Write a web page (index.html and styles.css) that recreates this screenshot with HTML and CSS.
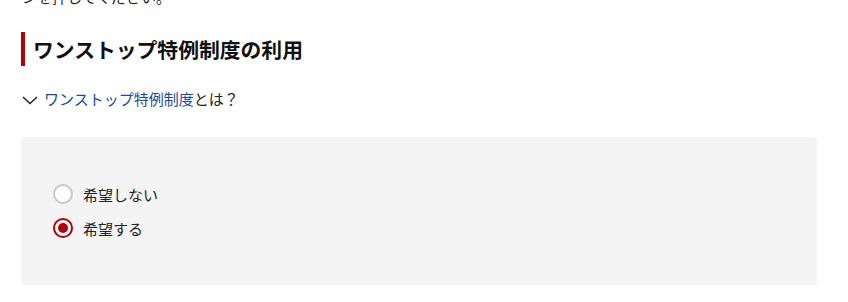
FILE: index.html
```html
<!DOCTYPE html>
<html lang="ja">
<head>
    <meta charset="UTF-8">
    <meta name="viewport" content="width=device-width, initial-scale=1.0">
    <title>ワンストップ特例制度の利用</title>
    <link rel="stylesheet" href="styles.css">
</head>
<body>
    <div class="container">
        <p class="lead">ンを押してください。</p>

        <h2 class="section-title">ワンストップ特例制度の利用</h2>

        <div class="toggle">
            <svg class="chevron" width="16" height="9" viewBox="0 0 16 9">
                <path d="M1 1 L8 7.5 L15 1" fill="none" stroke="#222" stroke-width="1.5"/>
            </svg>
            <a href="#" class="toggle-link">ワンストップ特例制度</a><span>とは？</span>
        </div>

        <div class="choice-box">
            <label class="radio">
                <input type="radio" name="onestop" value="no">
                <span class="mark"></span>
                希望しない
            </label>
            <label class="radio">
                <input type="radio" name="onestop" value="yes" checked>
                <span class="mark"></span>
                希望する
            </label>
        </div>
    </div>
</body>
</html>
```

FILE: styles.css
```css
body { margin: 0; background: #fff; color: #222; font-family: "Noto Sans CJK JP", "Noto Sans", sans-serif; }
.container { padding: 0 31px 0 21px; }
.lead { margin: -14px 0 0; font-size: 15px; line-height: 22px; padding-left: 1px; }
.section-title { margin: 24px 0 0; border-left: 4px solid #b0000b; padding-left: 8px; font-size: 20.8px; font-weight: bold; line-height: 34px; color: #111; }
.toggle { display: flex; align-items: center; margin-top: 21px; font-size: 15px; line-height: 24px; }
.chevron { margin: 2px 6px 0 1px; }
.toggle-link { color: #1d4a96; text-decoration: none; }
.choice-box { margin-top: 26px; background: #f4f4f4; border-radius: 4px; padding: 40px 32px 40px; }
.radio { display: flex; align-items: center; height: 34px; font-size: 15px; cursor: pointer; }
.radio input { display: none; }
.mark { width: 20px; height: 20px; box-sizing: border-box; border: 2px solid #c8c8c8; border-radius: 50%; background: #fff; margin-right: 10px; display: flex; align-items: center; justify-content: center; }
.radio input:checked + .mark { border-color: #b0000b; }
.radio input:checked + .mark::after { content: ""; width: 10px; height: 10px; border-radius: 50%; background: #b0000b; }
```
